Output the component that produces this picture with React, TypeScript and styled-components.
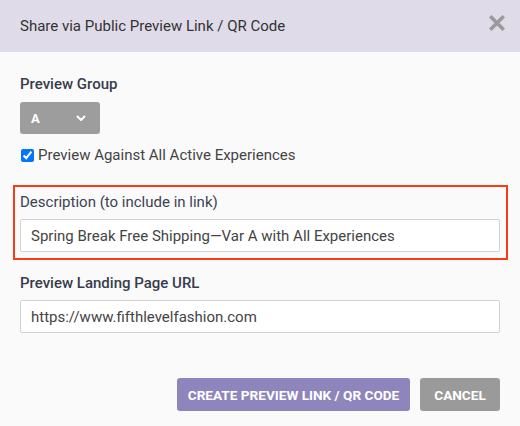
import { useState } from "react";
import styled, { createGlobalStyle } from "styled-components";

const GlobalStyle = createGlobalStyle`
  html, body {
    margin: 0;
    padding: 0;
    background: #fafafa;
  }
  body {
    font-family: Roboto, "Liberation Sans", Arial, sans-serif;
  }
`;

const Dialog = styled.div`
  width: 520px;
  height: 426px;
  background: #fafafa;
  display: flex;
  flex-direction: column;
`;

const Header = styled.div`
  height: 52px;
  background: #dfdbe8;
  display: flex;
  align-items: center;
  justify-content: space-between;
  padding: 0 14px 0 20px;
  box-sizing: border-box;
`;

const Title = styled.h2`
  margin: 0;
  font-size: 15px;
  font-weight: 400;
  color: #333;
`;

const CloseButton = styled.button`
  border: 0;
  background: none;
  padding: 0;
  width: 18px;
  height: 18px;
  display: flex;
  align-items: center;
  justify-content: center;
  cursor: pointer;
  margin-top: -6px;
`;

const Body = styled.div`
  flex: 1;
  display: flex;
  flex-direction: column;
  padding: 23px 20px 0;
`;

const Label = styled.label<{ light?: boolean }>`
  display: block;
  font-size: 15px;
  line-height: 18px;
  font-weight: ${({ light }) => (light ? 400 : 500)};
  color: ${({ light }) => (light ? "#3b4352" : "#363d4c")};
`;

const Select = styled.div`
  margin-top: 9px;
  width: 80px;
  height: 32px;
  border-radius: 3px;
  background: #9d9d9d;
  color: #fff;
  display: flex;
  align-items: center;
  justify-content: space-between;
  padding: 0 14px 0 11px;
  box-sizing: border-box;
  font-size: 13px;
  font-weight: 700;
`;

const CheckRow = styled.label`
  display: flex;
  align-items: center;
  gap: 4px;
  margin-top: 12px;
  font-size: 15px;
  color: #444;

  input {
    margin: 0 0 0 1px;
    width: 13px;
    height: 13px;
    accent-color: #0075ff;
  }
`;

const Highlight = styled.div`
  margin: 21px -8px 0 -7px;
  border: 2px solid #fa3c16;
  padding: 6px 6px 6px 5px;
`;

const Field = styled.div<{ gap: number }>`
  margin-top: ${({ gap }) => gap}px;
`;

const TextInput = styled.input`
  display: block;
  width: 100%;
  box-sizing: border-box;
  height: 33px;
  margin-top: 8px;
  border: 1px solid #d3d3d3;
  border-radius: 2px;
  background: #fff;
  padding: 0 10px;
  font-family: Roboto, "Liberation Sans", Arial, sans-serif;
  font-size: 15px;
  color: #444;
  outline: none;
`;

const Actions = styled.div`
  margin-top: 45px;
  display: flex;
  justify-content: flex-end;
  gap: 10px;
`;

const Button = styled.button<{ tone: "primary" | "muted" }>`
  height: 33px;
  border: 0;
  border-radius: 3px;
  padding: 0 ${({ tone }) => (tone === "primary" ? 10 : 14)}px;
  min-width: ${({ tone }) => (tone === "primary" ? 233 : 80)}px;
  background: ${({ tone }) => (tone === "primary" ? "#8e85bc" : "#9a9a9a")};
  color: #fff;
  font-family: Roboto, "Liberation Sans", Arial, sans-serif;
  font-size: 13.6px;
  font-weight: 700;
  text-transform: uppercase;
  cursor: pointer;
`;

const CloseIcon = () => (
  <svg width="16" height="16" viewBox="0 0 16 16">
    <path d="M2.5 2.5 L13.5 13.5 M13.5 2.5 L2.5 13.5" stroke="#9a9a9a" strokeWidth="3.6" strokeLinecap="square" />
  </svg>
);

const Chevron = () => (
  <svg width="10" height="7" viewBox="0 0 10 7">
    <path d="M1.5 1.5 L5 5 L8.5 1.5" stroke="#fff" strokeWidth="2" fill="none" strokeLinecap="round" strokeLinejoin="round" />
  </svg>
);

const App = () => {
  const [all, setAll] = useState(true);
  const [desc, setDesc] = useState("Spring Break Free Shipping\u2014Var A with All Experiences");
  const [url, setUrl] = useState("https://www.fifthlevelfashion.com");

  return (
    <>
      <GlobalStyle />
      <Dialog>
        <Header>
          <Title>Share via Public Preview Link / QR Code</Title>
          <CloseButton type="button" aria-label="Close">
            <CloseIcon />
          </CloseButton>
        </Header>
        <Body>
          <Label>Preview Group</Label>
          <Select>
            <span>A</span>
            <Chevron />
          </Select>
          <CheckRow>
            <input type="checkbox" checked={all} onChange={(e) => setAll(e.target.checked)} />
            Preview Against All Active Experiences
          </CheckRow>
          <Highlight>
            <Label light>Description (to include in link)</Label>
            <TextInput value={desc} onChange={(e) => setDesc(e.target.value)} />
          </Highlight>
          <Field gap={14}>
            <Label>Preview Landing Page URL</Label>
            <TextInput value={url} onChange={(e) => setUrl(e.target.value)} />
          </Field>
          <Actions>
            <Button tone="primary">Create Preview Link / QR Code</Button>
            <Button tone="muted">Cancel</Button>
          </Actions>
        </Body>
      </Dialog>
    </>
  );
};

export default App;
